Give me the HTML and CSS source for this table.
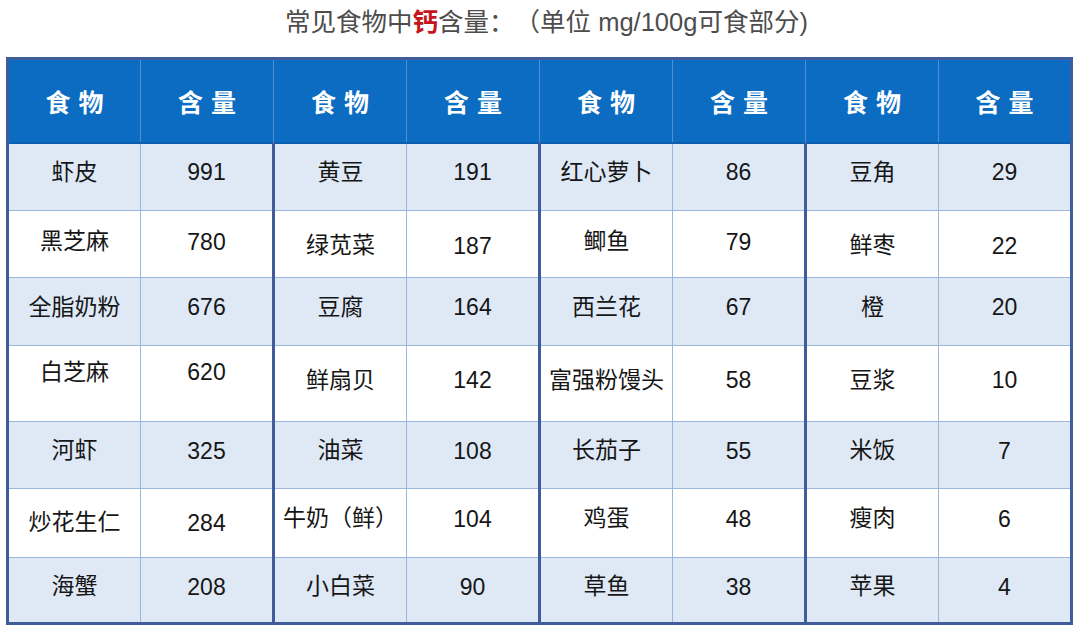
FILE: index.html
```html
<!DOCTYPE html>
<html lang="zh-CN">
<head>
<meta charset="utf-8">
<title>常见食物中钙含量</title>
<link rel="stylesheet" href="styles.css">
</head>
<body>
<div class="title">常见食物中<b class="ca">钙</b>含量：（单位 mg/100g可食部分)</div>
<table class="tbl">
  <colgroup>
    <col class="c"><col class="c"><col class="c"><col class="c"><col class="c"><col class="c"><col class="c"><col class="c">
  </colgroup>
  <thead>
    <tr class="hd">
      <th>食物</th><th>含量</th><th>食物</th><th>含量</th><th>食物</th><th>含量</th><th>食物</th><th>含量</th>
    </tr>
  </thead>
  <tbody>
    <tr class="r1 odd">
      <td>虾皮</td><td><span class="n">991</span></td><td class="g">黄豆</td><td><span class="n">191</span></td><td class="g">红心萝卜</td><td><span class="n">86</span></td><td class="g">豆角</td><td><span class="n">29</span></td>
    </tr>
    <tr class="r2">
      <td class="up">黑芝麻</td><td class="up"><span class="n">780</span></td><td class="g">绿苋菜</td><td><span class="n">187</span></td><td class="g up">鲫鱼</td><td class="up"><span class="n">79</span></td><td class="g">鲜枣</td><td><span class="n">22</span></td>
    </tr>
    <tr class="r3 odd">
      <td>全脂奶粉</td><td><span class="n">676</span></td><td class="g">豆腐</td><td><span class="n">164</span></td><td class="g">西兰花</td><td><span class="n">67</span></td><td class="g">橙</td><td><span class="n">20</span></td>
    </tr>
    <tr class="r4">
      <td class="up">白芝麻</td><td class="up"><span class="n">620</span></td><td class="g">鲜扇贝</td><td><span class="n">142</span></td><td class="g">富强粉馒头</td><td><span class="n">58</span></td><td class="g">豆浆</td><td><span class="n">10</span></td>
    </tr>
    <tr class="r5 odd">
      <td>河虾</td><td><span class="n">325</span></td><td class="g">油菜</td><td><span class="n">108</span></td><td class="g">长茄子</td><td><span class="n">55</span></td><td class="g">米饭</td><td><span class="n">7</span></td>
    </tr>
    <tr class="r6">
      <td class="dn">炒花生仁</td><td class="dn"><span class="n">284</span></td><td class="g">牛奶（鲜）</td><td><span class="n">104</span></td><td class="g">鸡蛋</td><td><span class="n">48</span></td><td class="g">瘦肉</td><td><span class="n">6</span></td>
    </tr>
    <tr class="r7 odd">
      <td>海蟹</td><td><span class="n">208</span></td><td class="g">小白菜</td><td><span class="n">90</span></td><td class="g">草鱼</td><td><span class="n">38</span></td><td class="g">苹果</td><td><span class="n">4</span></td>
    </tr>
  </tbody>
</table>
</body>
</html>
```
FILE: styles.css
```css
html, body {
  margin: 0;
  padding: 0;
  background: #ffffff;
}
body {
  width: 1080px;
  height: 631px;
  overflow: hidden;
  font-family: "Liberation Sans", "Noto Sans CJK SC", sans-serif;
}
.title {
  height: 44px;
  line-height: 44px;
  margin-bottom: 13px;
  text-align: center;
  font-size: 25.5px;
  color: #4d4d4d;
  padding-left: 13px;
  text-spacing-trim: space-all;
  white-space: nowrap;
}
.title .ca {
  color: #c4161c;
  font-weight: 700;
}
.tbl {
  margin-left: 6px;
  width: 1065px;
  table-layout: fixed;
  border-collapse: collapse;
  border: 3px solid #3f5d9b;
}
.tbl .c {
  width: 133px;
}
.hd {
  height: 84px;
  background: #0b6cc2;
}
.hd th {
  color: #ffffff;
  font-size: 25px;
  font-weight: 700;
  letter-spacing: 8px;
  text-indent: 8px;
  border: 1px solid #4f8fd2;
  border-top: none;
  border-bottom: 2px solid #0a5fb0;
  padding: 0;
}
.tbl td {
  text-align: center;
  font-size: 23px;
  color: #161616;
  border: 1px solid #9bb8da;
  padding: 0;
}
.tbl td.g {
  border-left: 3px solid #3f5d9b;
}
.n {
  display: inline-block;
  padding-top: 6px;
}
.odd {
  background: #dfe9f6;
}
.r1 { height: 68px; }
.r2 { height: 67px; }
.r3 { height: 68px; }
.r4 { height: 76px; }
.r5 { height: 67px; }
.r6 { height: 69px; }
.r7 { height: 66px; }

.r1 td { padding-bottom: 14px; }
.r2 td { padding-bottom: 2px; }
.r2 td.up { padding-bottom: 10px; }
.r3 td { padding-bottom: 14px; }
.r4 td { padding-bottom: 12px; }
.r4 td.up { padding-bottom: 28px; }
.r5 td { padding-bottom: 14px; }
.r6 td { padding-bottom: 14px; }
.r6 td.dn { padding-bottom: 6px; }
.r7 td { padding-bottom: 12px; }
```
